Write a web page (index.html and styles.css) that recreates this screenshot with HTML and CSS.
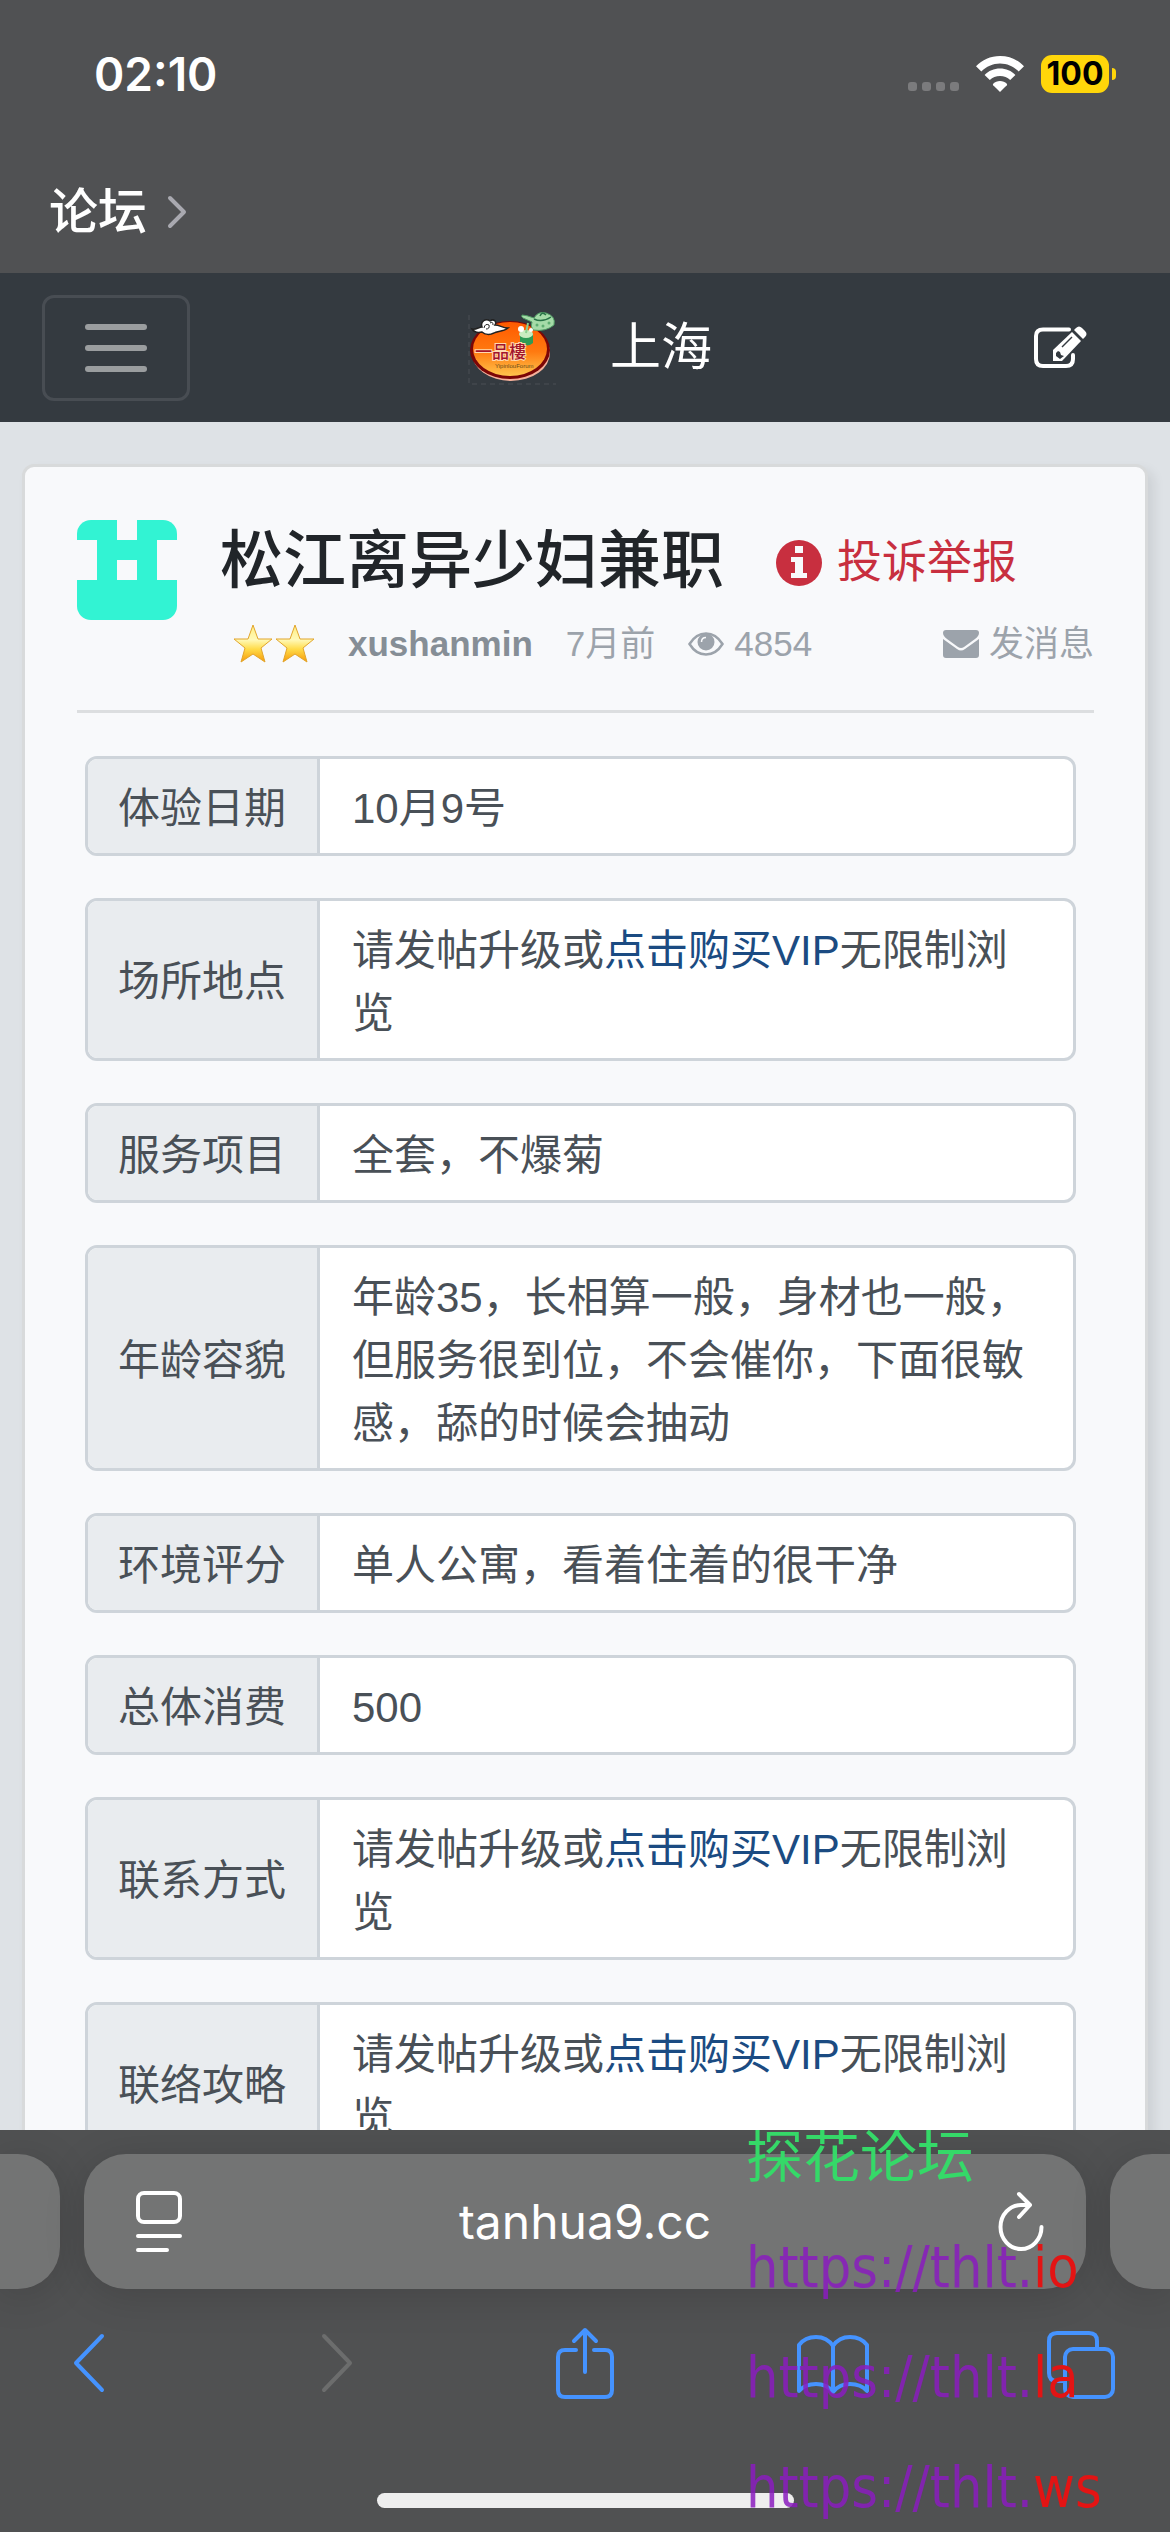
FILE: index.html
```html
<!DOCTYPE html>
<html lang="zh-CN">

<head>
    <meta charset="utf-8">
    <meta name="viewport" content="width=device-width, initial-scale=1">
    <title>松江离异少妇兼职</title>
    <link rel="stylesheet" href="styles.css">
</head>

<body>
    <header class="browser-top">
        <div class="status-bar">
            <span class="clock">02:10</span>
            <div class="status-icons">
                <div class="signal"><i></i><i></i><i></i><i></i></div>
                <svg class="wifi" viewBox="0 0 48 36" fill="#fff">
                    <path d="M24 0C14.500 0 6.200 3.800 0 10.200L5.300 15.500C10.200 10.500 16.800 7.500 24 7.500S37.800 10.500 42.700 15.500L48 10.200C41.800 3.800 33.500 0 24 0Z" />
                    <path d="M24 12.500C18 12.500 12.600 14.900 8.600 18.900L13.800 24.100C16.500 21.500 20 20 24 20S31.500 21.500 34.200 24.100L39.400 18.900C35.400 14.900 30 12.500 24 12.500Z" />
                    <path d="M24 25C21.300 25 19 26 17.200 27.700Q16.500 28.500 17.200 29.300L24 36L30.800 29.300Q31.500 28.500 30.800 27.700C29 26 26.700 25 24 25Z" />
                </svg>
                <div class="battery"><span>100</span></div>
            </div>
        </div>
        <a class="tab-group" href="#">论坛
            <svg viewBox="0 0 20 34" fill="none" stroke="#a9a9b0" stroke-width="4" stroke-linecap="round" stroke-linejoin="round">
                <path d="M3 3L17 17L3 31" />
            </svg>
        </a>
    </header>

    <nav class="navbar">
        <button class="navbar-toggler" aria-label="菜单"><i></i><i></i><i></i></button>
        <a class="brand" href="#">
            <svg class="logo" viewBox="0 0 88 74">
                <defs>
                    <linearGradient id="plate" x1="0" y1="0" x2="0" y2="1">
                        <stop offset="0" stop-color="#ff5a00" />
                        <stop offset=".55" stop-color="#ff7a10" />
                        <stop offset="1" stop-color="#ffc44c" />
                    </linearGradient>
                </defs>
                <path d="M1 4V73H88" fill="none" stroke="#4a4f55" stroke-dasharray="5 4" />
                <ellipse cx="43" cy="42" rx="39" ry="28" fill="#f5b09a" />
                <ellipse cx="42" cy="39" rx="40" ry="29" fill="#7c0606" />
                <ellipse cx="42" cy="38" rx="37" ry="27" fill="url(#plate)" />
                <path d="M4 18C8 19 11 16 14 16C12 10 18 7 22 10C26 7 29 11 27 14C32 14 34 17 40 17C35 21 29 20 26 22C22 24 17 24 14 21C10 22 6 21 4 18Z" fill="#fff" stroke="#222" stroke-width="1.500" />
                <path d="M16 17Q17 12 21 14Q22 18 18 18M22 12Q25 10 25 14" fill="none" stroke="#222" />
                <path d="M54 4Q58 4 66 7Q70 0 78 2Q88 5 86 14Q78 21 65 19Q62 15 64 11L55 7Q53 6 54 4Z" fill="#a5dba8" stroke="#4f9a63" />
                <path d="M66 8Q74 12 83 6M72 5Q74 0 78 4" fill="none" stroke="#277346" stroke-width="1.500" />
                <g fill="#5fae72">
                    <circle cx="69" cy="14" r="1.500" />
                    <circle cx="75" cy="15" r="1.500" />
                    <circle cx="81" cy="12" r="1.500" />
                </g>
                <path d="M52 22H65V32Q59 37 52 32Z" fill="#2e9a55" />
                <ellipse cx="58" cy="23" rx="7" ry="4" fill="#c9ecc0" />
                <path d="M58 22L60 12" stroke="#8bd08e" stroke-width="2" />
                <circle cx="53" cy="18" r="3" fill="#fff" />
                <circle cx="63" cy="19" r="2" fill="#fff" />
                <text class="logo-name" x="7" y="47">一品樓</text>
                <text class="logo-sub" x="27" y="57">YipinlouForum</text>
            </svg>
            <span>上海</span>
        </a>
        <button class="edit" aria-label="发帖">
            <svg viewBox="0 0 54 44">
                <path d="M35 3.500H9Q2 3.500 2 10V33Q2 40 9 40H32Q39 40 39 33V29" fill="none" stroke="#fff" stroke-width="4" stroke-linecap="round" />
                <path d="M19 24L38 6L47 15L28 35H19Z" fill="#fff" />
                <path d="M40 4L42 2Q45-1 48 2L51 5Q54 8 51 11L49 13Z" fill="#fff" />
                <path d="M28 21L38 11" stroke="#343a40" stroke-width="1.500" />
                <path d="M22 27L24 25L26 26L27 29L30 30L26 33L22 30Z" fill="#343a40" />
            </svg>
        </button>
    </nav>

    <main class="page">
        <article class="card">
            <div class="post-head">
                <svg class="avatar" viewBox="0 0 5 5" fill="#32f3d3" shape-rendering="crispEdges">
                    <path d="M0 0H2V1H3V0H5V1H4V3H5V5H0V3H1V1H0ZM2 2V3H3V2Z" fill-rule="evenodd" />
                </svg>
                <div class="post-info">
                    <div class="title-row">
                        <h1>松江离异少妇兼职</h1>
                        <a class="report" href="#">
                            <svg viewBox="0 0 46 46">
                                <circle cx="23" cy="23" r="23" fill="#c82f3f" />
                                <path d="M19 6H27V13H19ZM15 17H27V33H31V38H15V33H19V22H15Z" fill="#f8f9fb" />
                            </svg>
                            投诉举报
                        </a>
                    </div>
                    <div class="meta-row">
                        <svg class="stars" viewBox="0 0 82 40">
                            <defs>
                                <linearGradient id="gold" x1="0" y1="0" x2="0" y2="1">
                                    <stop offset="0" stop-color="#ffee80" />
                                    <stop offset=".4" stop-color="#fff9b8" />
                                    <stop offset=".65" stop-color="#ffdc4a" />
                                    <stop offset="1" stop-color="#f79a08" />
                                </linearGradient>
                            </defs>
                            <g fill="url(#gold)" stroke="#e2a52c" stroke-linejoin="round">
                                <path d="M20 1L25 15L39 15L28 24L32 38L20 30L8 38L12 24L1 15L15 15Z" />
                                <path d="M62 1L67 15L81 15L70 24L74 38L62 30L50 38L54 24L43 15L57 15Z" />
                            </g>
                        </svg>
                        <a class="author" href="#">xushanmin</a>
                        <span>7月前</span>
                        <span class="views">
                            <svg viewBox="0 0 36 24">
                                <path d="M1.500 12Q8 1.500 18 1.500T34.500 12Q28 22.500 18 22.500T1.500 12Z" fill="none" stroke="#9ca3ab" stroke-width="2.500" />
                                <circle cx="18" cy="10" r="8.500" fill="#9ca3ab" />
                                <path d="M13.500 10Q13.500 5.500 18 5.500" fill="none" stroke="#f8f9fb" stroke-width="1.500" />
                            </svg>
                            4854
                        </span>
                        <a class="message" href="#">
                            <svg viewBox="0 0 36 28" fill="#9ca3ab">
                                <path d="M3 0H33Q36 0 36 3Q36 6 32 9L21 17Q18 19 15 17L4 9Q0 6 0 3Q0 0 3 0Z" />
                                <path d="M0 9L14 19Q18 22 22 19L36 9V25Q36 28 33 28H3Q0 28 0 25Z" />
                            </svg>
                            发消息
                        </a>
                    </div>
                </div>
            </div>
            <dl class="fields">
                <div class="field">
                    <dt>体验日期</dt>
                    <dd>10月9号</dd>
                </div>
                <div class="field">
                    <dt>场所地点</dt>
                    <dd>请发帖升级或<a href="#">点击购买VIP</a>无限制浏览</dd>
                </div>
                <div class="field">
                    <dt>服务项目</dt>
                    <dd>全套，不爆菊</dd>
                </div>
                <div class="field">
                    <dt>年龄容貌</dt>
                    <dd>年龄35，长相算一般，身材也一般，但服务很到位，不会催你，下面很敏感，舔的时候会抽动</dd>
                </div>
                <div class="field">
                    <dt>环境评分</dt>
                    <dd>单人公寓，看着住着的很干净</dd>
                </div>
                <div class="field">
                    <dt>总体消费</dt>
                    <dd>500</dd>
                </div>
                <div class="field">
                    <dt>联系方式</dt>
                    <dd>请发帖升级或<a href="#">点击购买VIP</a>无限制浏览</dd>
                </div>
                <div class="field">
                    <dt>联络攻略</dt>
                    <dd>请发帖升级或<a href="#">点击购买VIP</a>无限制浏览</dd>
                </div>
            </dl>
        </article>
    </main>

    <footer class="browser-bottom">
        <div class="address-row">
            <div class="next-tab next-tab-left"></div>
            <div class="address">
                <button aria-label="页面设置">
                    <svg width="46" height="62" viewBox="0 0 46 62" fill="none" stroke="#fff" stroke-width="4" stroke-linecap="round">
                        <rect x="2" y="2" width="42" height="29" rx="6" />
                        <path d="M2 45H44M2 59H31" />
                    </svg>
                </button>
                <button class="url">tanhua9.cc</button>
                <button aria-label="刷新">
                    <svg width="46" height="62" viewBox="0 0 46 62" fill="none" stroke="#fff" stroke-width="4" stroke-linecap="round" stroke-linejoin="round">
                        <path d="M32 14H23A20.500 22 0 1 0 43.500 36M21 3L32 14L21 26" />
                    </svg>
                </button>
            </div>
            <div class="next-tab next-tab-right"></div>
        </div>
        <div class="toolbar">
            <button aria-label="后退">
                <svg width="34" height="72" viewBox="0 0 34 72">
                    <path d="M30 9L4 36L30 63" />
                </svg>
            </button>
            <button aria-label="前进" disabled>
                <svg width="34" height="72" viewBox="0 0 34 72">
                    <path d="M4 9L30 36L4 63" />
                </svg>
            </button>
            <button aria-label="分享">
                <svg width="58" height="72" viewBox="0 0 58 72">
                    <path d="M20 23H9Q2 23 2 30V63Q2 70 9 70H49Q56 70 56 63V30Q56 23 49 23H38M29 45V3M18 14L29 3L40 14" />
                </svg>
            </button>
            <button aria-label="书签">
                <svg width="72" height="72" viewBox="0 0 72 72">
                    <path d="M36 19Q30 10 19 10Q8 10 2 18V64Q8 57 19 57Q30 57 36 65Q42 57 53 57Q64 57 70 64V18Q64 10 53 10Q42 10 36 19V65" />
                </svg>
            </button>
            <button aria-label="标签页">
                <svg width="68" height="72" viewBox="0 0 68 72">
                    <rect x="18" y="22" width="48" height="48" rx="8" />
                    <path d="M50 21V14Q50 6 42 6H10Q2 6 2 14V46Q2 54 10 54H17" />
                </svg>
            </button>
        </div>
        <div class="home-bar"></div>
        <div class="links">
            <b>探花论坛</b>
            <span>https://thlt.<em>io</em></span>
            <span>https://thlt.<em>la</em></span>
            <span>https://thlt.<em>ws</em></span>
        </div>
    </footer>
</body>

</html>
```
FILE: styles.css
```css
* {
    box-sizing: border-box;
}

body {
    font-family: "Liberation Sans", "Noto Sans CJK SC", sans-serif;
    margin: 0;
    height: 100vh;
    display: flex;
    flex-direction: column;
    overflow: hidden;
    background: #dee2e6;
    color: #495057;
}

a {
    color: inherit;
    text-decoration: none;
}

button {
    padding: 0;
    border: 0;
    background: none;
    color: inherit;
    font: inherit;
    cursor: pointer;
}

svg {
    display: block;
    flex: none;
}

/* browser chrome, top */
.browser-top {
    background: #505153;
    color: #fff;
    padding-bottom: 25px;
}

.status-bar {
    display: flex;
    justify-content: space-between;
    align-items: center;
    height: 148px;
    padding: 0 54px 0 94px;
}

.clock {
    font-family: Inter, sans-serif;
    font-size: 46px;
    font-weight: 600;
}

.status-icons {
    display: flex;
    align-items: center;
    gap: 17px;
}

.signal {
    display: flex;
    align-self: flex-end;
    gap: 5px;
    padding-bottom: 2px;
}

.signal i {
    width: 9px;
    height: 9px;
    border-radius: 3px;
    background: #7b7b7d;
}

.wifi {
    width: 48px;
    height: 36px;
}

.battery {
    display: flex;
    align-items: center;
    gap: 3px;
}

.battery span {
    width: 68px;
    border-radius: 11px;
    background: #ffd60a;
    color: #000;
    font: 700 32px/38px Inter, sans-serif;
    text-align: center;
}

.battery::after {
    content: "";
    width: 4px;
    height: 12px;
    border-radius: 0 6px 6px 0;
    background: #ffd60a;
}

.tab-group {
    display: flex;
    align-items: center;
    gap: 20px;
    height: 100px;
    padding: 28px 49px 0;
    font-size: 49px;
    font-weight: 500;
    line-height: 72px;
}

.tab-group svg {
    width: 20px;
    height: 34px;
}

/* site navbar */
.navbar {
    display: grid;
    grid-template-columns: 1fr auto 1fr;
    align-items: center;
    padding: 22px 32px 21px 42px;
    background: #343a40;
    color: #fff;
}

.navbar-toggler {
    display: flex;
    flex-direction: column;
    align-items: center;
    justify-content: center;
    gap: 15px;
    width: 148px;
    height: 106px;
    border: 3px solid #484d53;
    border-radius: 12px;
}

.navbar-toggler i {
    width: 62px;
    height: 6px;
    border-radius: 3px;
    background: #9a9d9f;
}

.brand {
    display: flex;
    align-items: center;
    gap: 54px;
    font-size: 51px;
    line-height: 72px;
}

.logo {
    width: 88px;
    height: 74px;
}

.logo-name {
    font: 500 17px "Noto Sans CJK SC", sans-serif;
    fill: #a3142b;
    stroke: #ffd9b0;
    stroke-width: 2px;
    paint-order: stroke;
}

.logo-sub {
    font: 6px "Liberation Sans", sans-serif;
    fill: #6b4a18;
}

.edit {
    justify-self: end;
    margin-right: 50px;
}

.edit svg {
    width: 54px;
    height: 44px;
}

/* post */
.page {
    flex: 1;
    min-height: 0;
    overflow: hidden;
    padding: 42px 22px 0;
}

.card {
    padding: 53px 51px 42px 52px;
    border: 3px solid #d8dadb;
    border-radius: 12px;
    background: #f8f9fb;
    box-shadow: 6px 6px 12px rgba(0, 0, 0, .08);
}

.post-head {
    display: flex;
    gap: 43px;
    padding-bottom: 42px;
    border-bottom: 3px solid #dcdee0;
}

.avatar {
    width: 100px;
    height: 100px;
    border-radius: 14px;
}

.post-info {
    flex: 1;
}

.title-row {
    display: flex;
    align-items: center;
    gap: 52px;
    height: 80px;
}

h1 {
    margin: 0;
    color: #212529;
    font-size: 63px;
    font-weight: 500;
    line-height: 80px;
}

.report {
    display: flex;
    align-items: center;
    gap: 15px;
    padding-top: 6px;
    color: #c82f3f;
    font-size: 45px;
    line-height: 60px;
}

.report svg {
    width: 46px;
    height: 46px;
}

.meta-row {
    display: flex;
    align-items: center;
    gap: 33px;
    padding: 20px 0 0 13px;
    color: #9ca3ab;
    font-size: 35px;
    line-height: 48px;
}

.stars {
    width: 82px;
    height: 40px;
}

.author {
    color: #868e96;
    font-weight: 700;
}

.views,
.message {
    display: flex;
    align-items: center;
    gap: 10px;
}

.message {
    margin-left: auto;
}

.views svg {
    width: 36px;
    height: 24px;
}

.message svg {
    width: 36px;
    height: 28px;
}

.fields {
    display: flex;
    flex-direction: column;
    gap: 42px;
    margin: 43px 18px 0 8px;
    font-size: 42px;
    line-height: 63px;
}

.field {
    display: flex;
    border: 3px solid #ced4da;
    border-radius: 12px;
    background: #fff;
    overflow: hidden;
}

.field dt {
    display: flex;
    flex: none;
    align-items: center;
    padding: 4px 31px 0 30px;
    border-right: 3px solid #ced4da;
    background: #e9ecef;
}

.field dd {
    flex: 1;
    margin: 0;
    padding: 18px 28px 13px 32px;
}

.field a {
    color: #1b4b82;
}

/* browser chrome, bottom */
.browser-bottom {
    position: relative;
    padding: 24px 0;
    background: #505152;
    overflow: hidden;
}

.address-row {
    display: flex;
    gap: 24px;
}

.next-tab,
.address {
    height: 135px;
    border-radius: 42px;
    background: #737474;
    box-shadow: 0 6px 42px rgba(0, 0, 0, .14);
}

.next-tab {
    width: 60px;
}

.next-tab-left {
    border-radius: 0 42px 42px 0;
}

.next-tab-right {
    border-radius: 42px 0 0 42px;
}

.address {
    display: flex;
    flex: 1;
    align-items: center;
    justify-content: space-between;
    padding: 0 42px 0 52px;
    color: #fff;
}

.url {
    padding-right: 10px;
    font-family: Inter, sans-serif;
    font-size: 48px;
}

.toolbar {
    display: flex;
    justify-content: space-between;
    margin-top: 38px;
    padding: 0 55px;
}

.toolbar button {
    display: flex;
    justify-content: center;
    width: 68px;
}

.toolbar svg {
    fill: none;
    stroke: #4593ff;
    stroke-width: 4px;
    stroke-linecap: round;
    stroke-linejoin: round;
}

.toolbar button:disabled svg {
    stroke: #6c6d6d;
}

.home-bar {
    width: 417px;
    height: 15px;
    margin: 94px auto 0;
    border-radius: 8px;
    background: #eee;
}

/* floating links over the toolbar */
.links {
    position: absolute;
    top: -28px;
    left: 746px;
    display: flex;
    flex-direction: column;
    color: rgba(138, 28, 190, .85);
    font: 57px/110px "DejaVu Sans Condensed", "Noto Sans CJK SC", sans-serif;
    white-space: nowrap;
}

.links b {
    color: #35d968;
    font-weight: 400;
}

.links em {
    color: #e31414;
    font-style: normal;
}
```
